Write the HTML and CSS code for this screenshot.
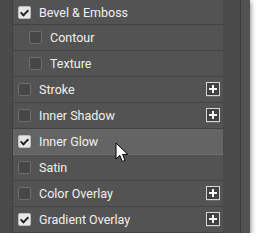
FILE: index.html
```html
<!DOCTYPE html>
<html lang="en">

<head>
    <meta charset="UTF-8">
    <meta name="viewport" content="width=device-width, initial-scale=1.0">
    <title>Layer Style</title>
    <link rel="stylesheet" href="styles.css">
</head>

<body>
    <div class="dialog">
        <div class="gutter"></div>

        <!-- style list -->
        <div class="style-list">
            <div class="row first">
                <span class="check on"></span>
                <span class="label">Bevel &amp; Emboss</span>
            </div>
            <div class="row sub">
                <span class="check"></span>
                <span class="label">Contour</span>
            </div>
            <div class="row sub">
                <span class="check"></span>
                <span class="label">Texture</span>
            </div>
            <div class="row">
                <span class="check"></span>
                <span class="label">Stroke</span>
                <span class="add"></span>
            </div>
            <div class="row">
                <span class="check"></span>
                <span class="label">Inner Shadow</span>
                <span class="add"></span>
            </div>
            <div class="row active">
                <span class="check on"></span>
                <span class="label">Inner Glow</span>
                <svg class="cursor" width="15" height="22" viewBox="0 0 15 22">
                    <path d="M1 1 L1 17 L4.8 13.3 L7.3 19.5 L10 18.4 L7.6 12.4 L12.8 12.4 Z" fill="#fff" stroke="#000" stroke-width="1" stroke-linejoin="round"/>
                </svg>
            </div>
            <div class="row">
                <span class="check"></span>
                <span class="label">Satin</span>
            </div>
            <div class="row">
                <span class="check"></span>
                <span class="label">Color Overlay</span>
                <span class="add"></span>
            </div>
            <div class="row">
                <span class="check on"></span>
                <span class="label">Gradient Overlay</span>
                <span class="add"></span>
            </div>
        </div>

        <div class="scroll"></div>
        <div class="edge"></div>
    </div>
</body>

</html>
```

FILE: styles.css
```css
body {
    margin: 0;
    padding: 0;
    background: #fff;
    font-family: Roboto, "Liberation Sans", Arial, sans-serif;
    overflow: hidden;
}

.dialog {
    display: flex;
    width: 250px;
    height: 233px;
    background: #4d4d4d;
    box-shadow: 1px 2px 5px rgba(0, 0, 0, 0.45);
}

.gutter {
    width: 12px;
    background: #4a4a4a;
    border-right: 1px solid #3f3f3f;
}

.style-list {
    width: 210px;
    display: flex;
    flex-direction: column;
    background: #535353;
}

.row {
    position: relative;
    display: flex;
    align-items: center;
    height: 25px;
    padding-left: 5px;
    border-bottom: 1px solid #424242;
    color: #f0f0f0;
    font-size: 12.5px;
}

.row.first {
    height: 24px;
}

.row.sub {
    padding-left: 16px;
}

.row.active {
    background: #646464;
    border-bottom: 1px dotted #7a7a7a;
}

/* checkboxes */
.check {
    width: 11px;
    height: 11px;
    margin-right: 8px;
    border: 1px solid #6e6e6e;
    border-radius: 2px;
    background: #474747;
    position: relative;
}

.check.on {
    background: #e6e6e6;
    border-color: #bdbdbd;
}

.check.on::after {
    content: "";
    position: absolute;
    left: 3px;
    top: 1px;
    width: 3px;
    height: 6px;
    border: solid #222;
    border-width: 0 2px 2px 0;
    transform: rotate(45deg);
}

/* plus buttons */
.add {
    position: absolute;
    right: 3px;
    top: 5px;
    width: 12px;
    height: 12px;
    border: 1px solid #d4d4d4;
    background: #424242;
    box-shadow: 0 1px 0 #6a6a6a;
}

.add::before,
.add::after {
    content: "";
    position: absolute;
    background: #f4f4f4;
}

.add::before {
    left: 2px;
    top: 5px;
    width: 8px;
    height: 2px;
}

.add::after {
    left: 5px;
    top: 2px;
    width: 2px;
    height: 8px;
}

.cursor {
    position: absolute;
    left: 102px;
    top: 13px;
}

.scroll {
    width: 17px;
    background: #4a4a4a;
    border-right: 1px solid #3a3a3a;
}

.edge {
    flex: 1;
    background: #525252;
}
```
